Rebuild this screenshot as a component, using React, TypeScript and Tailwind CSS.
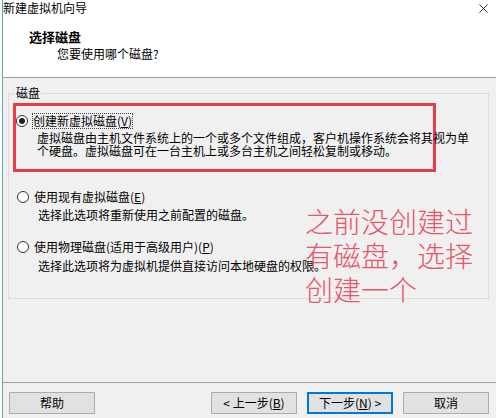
import React from 'react';
import { X } from 'lucide-react';

const font = { fontFamily: '"Noto Sans CJK SC", "Microsoft YaHei", sans-serif' };

const Radio: React.FC<{ checked?: boolean }> = ({ checked }) => (
  <span className="flex h-[12px] w-[12px] shrink-0 items-center justify-center rounded-full border border-[#333] bg-white">
    {checked && <span className="h-[6px] w-[6px] rounded-full bg-[#222]" />}
  </span>
);

const Btn: React.FC<{ children: React.ReactNode; primary?: boolean }> = ({ children, primary }) => (
  <button
    className={`flex h-[22px] w-[86px] items-center justify-center bg-[#e1e1e1] text-[12px] leading-none text-black ${
      primary ? 'border-2 border-[#0078d7]' : 'border border-[#adadad]'
    }`}
  >
    {children}
  </button>
);

export default function App() {
  return (
    <div className="relative h-[418px] w-[496px] overflow-hidden bg-white pl-[2px] text-black" style={font}>
      <div className="flex h-full flex-col border-l border-[#4fb3a9]">
        {/* header */}
        <div className="h-[78px] shrink-0 border-b border-[#a0a0a0] bg-white">
          <div className="flex h-[17px] items-start">
            <span className="pt-[1px] text-[12px] leading-[14px]">新建虚拟机向导</span>
            <X className="ml-auto mr-[5px] mt-[1px] h-[15px] w-[15px] text-black" strokeWidth={1.3} />
          </div>
          <div className="mt-[12px] pl-[26px] text-[13px] font-bold leading-[16px]">选择磁盘</div>
          <div className="mt-[1px] pl-[54px] text-[12px] leading-[16px]">您要使用哪个磁盘?</div>
        </div>

        {/* body */}
        <div className="flex flex-1 flex-col bg-[#f0f0f0]">
          <fieldset className="ml-[5px] mt-[7px] h-[214px] w-[481px] border border-[#dcdcdc] pl-[4px]">
            <legend className="ml-[2px] px-[1px] text-[12px] leading-[16px]">磁盘</legend>

            <div className="mt-[2px] w-[423px] border-[3px] border-[#e63c4c] pb-[12px] pt-[7px]">
              <div className="flex h-[16px] items-center gap-[5px] text-[12px]">
                <Radio checked />
                <span className="outline-1 outline-dotted outline-[#444] leading-[14px]">
                  创建新虚拟磁盘(<span className="underline">V</span>)
                </span>
              </div>
              <div className="mt-[2px] whitespace-nowrap pl-[21px] text-[12px] leading-[13px]">
                <div>虚拟磁盘由主机文件系统上的一个或多个文件组成，客户机操作系统会将其视为单</div>
                <div>个硬盘。虚拟磁盘可在一台主机上或多台主机之间轻松复制或移动。</div>
              </div>
            </div>

            <div className="ml-[4px] mt-[17px]">
              <div className="flex h-[16px] items-center gap-[5px] text-[12px]">
                <Radio />
                <span className="leading-[14px]">
                  使用现有虚拟磁盘(<span className="underline">E</span>)
                </span>
              </div>
              <div className="mt-[3px] whitespace-nowrap pl-[21px] text-[12px] leading-[13px]">
                选择此选项将重新使用之前配置的磁盘。
              </div>
            </div>

            <div className="ml-[4px] mt-[18px]">
              <div className="flex h-[16px] items-center gap-[5px] text-[12px]">
                <Radio />
                <span className="leading-[14px]">
                  使用物理磁盘(适用于高级用户)(<span className="underline">P</span>)
                </span>
              </div>
              <div className="mt-[4px] whitespace-nowrap pl-[21px] text-[12px] leading-[13px]">
                选择此选项将为虚拟机提供直接访问本地硬盘的权限。
              </div>
            </div>
          </fieldset>

          {/* footer */}
          <div className="mt-auto flex h-[36px] items-start border-t border-[#a0a0a0] pr-[7px] pt-[9px]">
            <div className="ml-[6px]">
              <Btn>帮助</Btn>
            </div>
            <div className="ml-auto flex gap-[10px]">
              <Btn>
                &lt; 上一步(<span className="underline">B</span>)
              </Btn>
              <Btn primary>
                下一步(<span className="underline">N</span>) &gt;
              </Btn>
              <Btn>取消</Btn>
            </div>
          </div>
        </div>
      </div>

      {/* annotation */}
      <div className="absolute left-[305px] top-[204px] text-[28px] font-light leading-[34px] text-[#e8546a]">
        <div>之前没创建过</div>
        <div>有磁盘，选择</div>
        <div>创建一个</div>
      </div>
    </div>
  );
}
